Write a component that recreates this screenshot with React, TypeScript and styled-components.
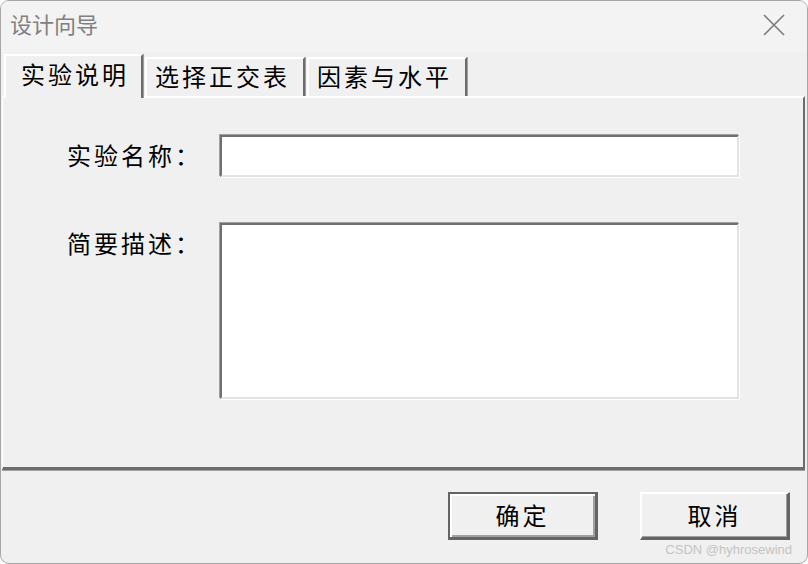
import styled, { createGlobalStyle } from 'styled-components';

const GlobalStyle = createGlobalStyle`
    html, body {
        margin: 0;
        padding: 0;
        background: #ffffff;
    }
    * {
        box-sizing: border-box;
    }
`;

const Window = styled.div`
    position: relative;
    width: 808px;
    height: 564px;
    background-color: #f0f0f0;
    border: 1px solid #a6a6a6;
    border-radius: 9px;
    display: flex;
    flex-direction: column;
    overflow: hidden;
    font-family: "Noto Sans CJK SC", "Noto Sans", sans-serif;
`;

const TitleBar = styled.div`
    height: 51px;
    background-color: #f3f3f3;
    display: flex;
    align-items: center;
    justify-content: space-between;
    padding: 0 22px 4px 9px;
`;

const Title = styled.span`
    font-size: 22px;
    color: #808080;
    margin-bottom: 3px;
`;

const Close = styled.svg`
    width: 22px;
    height: 22px;
`;

const TabStrip = styled.div`
    height: 44px;
    display: flex;
    align-items: flex-end;
    padding-left: 3px;
    position: relative;
    z-index: 1;
`;

const Tab = styled.div<{ $active?: boolean }>`
    height: ${p => (p.$active ? '44px' : '39px')};
    padding: ${p => (p.$active ? '0 12px 7px 15px' : '0 13px 4px 8px')};
    display: flex;
    align-items: center;
    font-size: 24px;
    letter-spacing: 3px;
    color: #000000;
    background-color: #f0f0f0;
    border-top: 2px solid #ffffff;
    border-left: 2px solid #ffffff;
    border-right: 2px solid #6c6c6c;
    box-shadow: 1px 0 0 #a0a0a0;
    margin-right: 2px;
    margin-bottom: ${p => (p.$active ? '-2px' : '0')};
`;

const TabPage = styled.div`
    height: 374px;
    margin: 0 2px 0 1px;
    border-top: 2px solid #ffffff;
    border-left: 1px solid #ffffff;
    border-right: 2px solid #6c6c6c;
    border-bottom: 3px solid #6c6c6c;
    box-shadow: 0 1px 0 #a0a0a0;
    padding: 37px 0 0 64px;
    display: grid;
    grid-template-columns: 153px 519px;
    grid-auto-rows: min-content;
    row-gap: 46px;
`;

const Label = styled.label`
    font-size: 24px;
    letter-spacing: 3px;
    color: #000000;
    height: 42px;
    line-height: 40px;
    white-space: nowrap;
`;

const Field = styled.div<{ $tall?: boolean }>`
    height: ${p => (p.$tall ? '176px' : '42px')};
    background-color: #ffffff;
    border-top: 2px solid #6f6f6f;
    border-left: 2px solid #6f6f6f;
    border-right: 2px solid #e3e3e3;
    border-bottom: 2px solid #e3e3e3;
    box-shadow: 1px 1px 0 #ffffff, -1px -1px 0 #a0a0a0;
`;

const ButtonBar = styled.div`
    flex: 1;
    display: flex;
    justify-content: flex-end;
    align-items: flex-start;
    gap: 42px;
    padding: 22px 17px 0 0;
`;

const Button = styled.div<{ $default?: boolean }>`
    width: 150px;
    height: 48px;
    display: flex;
    align-items: center;
    justify-content: center;
    padding-bottom: 3px;
    font-size: 24px;
    letter-spacing: 3px;
    color: #000000;
    background-color: #f0f0f0;
    border-top: 2px solid ${p => (p.$default ? '#646464' : '#ffffff')};
    border-left: 2px solid ${p => (p.$default ? '#646464' : '#ffffff')};
    border-right: 3px solid #646464;
    border-bottom: 3px solid #646464;
    box-shadow: ${p => (p.$default ? 'inset 2px 2px 0 #ffffff, inset -2px -2px 0 #a0a0a0' : 'inset -1px -1px 0 #a0a0a0')};
`;

const Watermark = styled.span`
    position: absolute;
    right: 15px;
    bottom: 6px;
    font-family: "Liberation Sans", Arial, sans-serif;
    font-size: 13px;
    color: #c4c4c4;
`;

export default function App() {
    return (
        <>
            <GlobalStyle />
            <Window>
                <TitleBar>
                    <Title>设计向导</Title>
                    <Close viewBox="0 0 22 22">
                        <path d="M1 1L21 21M21 1L1 21" stroke="#7a7a7a" strokeWidth="1.6" fill="none" />
                    </Close>
                </TitleBar>
                <TabStrip>
                    <Tab $active>实验说明</Tab>
                    <Tab>选择正交表</Tab>
                    <Tab>因素与水平</Tab>
                </TabStrip>
                <TabPage>
                    <Label>实验名称：</Label>
                    <Field />
                    <Label>简要描述：</Label>
                    <Field $tall />
                </TabPage>
                <ButtonBar>
                    <Button $default>确定</Button>
                    <Button>取消</Button>
                </ButtonBar>
                <Watermark>CSDN @hyhrosewind</Watermark>
            </Window>
        </>
    );
}
